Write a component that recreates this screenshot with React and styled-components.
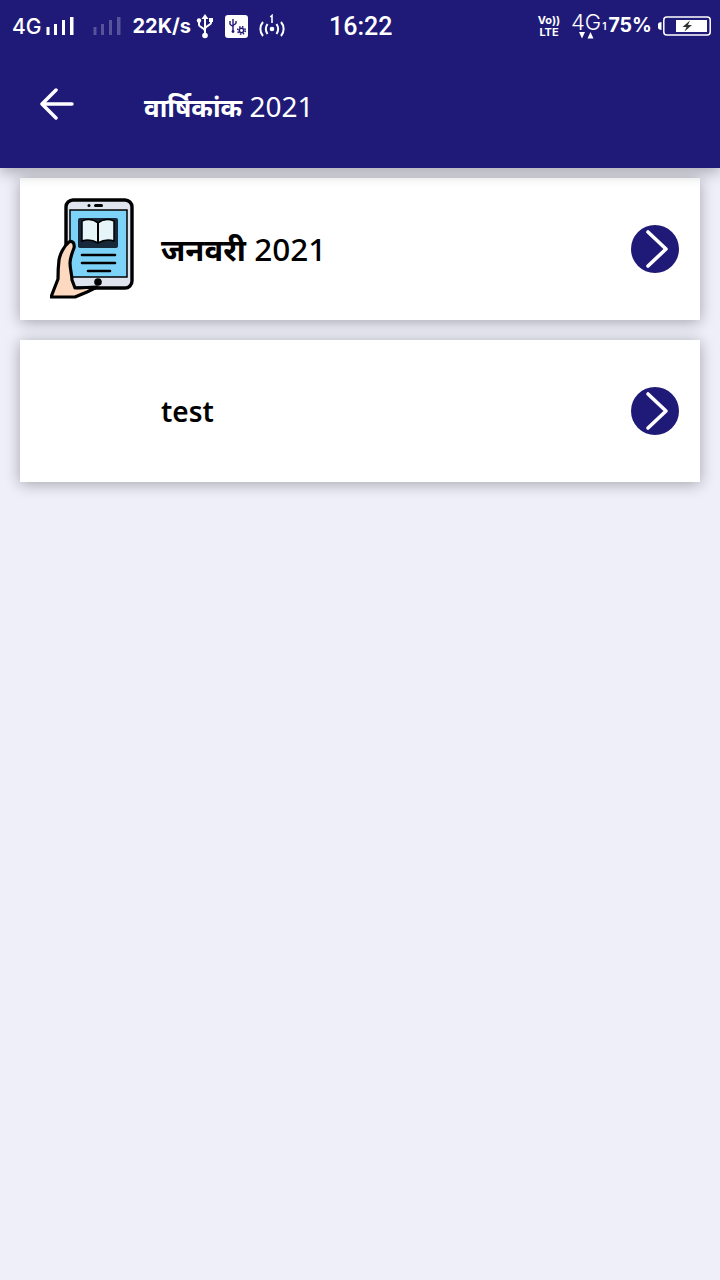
import React from 'react';
import styled, { createGlobalStyle } from 'styled-components';

const NAVY = '#1f1a77';

const GlobalStyle = createGlobalStyle`
  html, body {
    margin: 0;
    padding: 0;
    background: #eeeff9;
  }
  body {
    font-family: "Noto Sans", "Open Sans", sans-serif;
  }
`;

const Page = styled.div`
  width: 720px;
  height: 1280px;
  background: #eeeff9;
  overflow: hidden;
`;

const Header = styled.header`
  position: relative;
  z-index: 2;
  height: 168px;
  background: ${NAVY};
  box-shadow: 0 4px 14px rgba(0, 0, 0, 0.3);
`;

const StatusBar = styled.div`
  display: flex;
  align-items: center;
  height: 52px;
  padding: 0 12px;
  color: #fff;
  font-family: Inter, "Liberation Sans", sans-serif;
`;

const StatusGroup = styled.div`
  display: flex;
  align-items: center;
  width: ${(p) => p.$width}px;
  flex: none;
`;

const StatusText = styled.span`
  font-size: ${(p) => p.$size || 21}px;
  font-weight: ${(p) => p.$weight || 600};
  line-height: 1;
  margin-left: ${(p) => p.$ml || 0}px;
  white-space: nowrap;
`;

const Clock = styled.span`
  font-family: Roboto, sans-serif;
  font-size: 25px;
  font-weight: 500;
  width: 207px;
  flex: none;
`;

const Bars = styled.svg`
  flex: none;
  margin-left: ${(p) => p.$ml || 0}px;
  opacity: ${(p) => (p.$dim ? 0.25 : 1)};
`;

const StatusIcon = styled.svg`
  flex: none;
  margin-left: ${(p) => p.$ml || 0}px;
`;

const VolteLabel = styled.div`
  display: flex;
  flex-direction: column;
  align-items: center;
  width: 26px;
  flex: none;
  font-size: 11px;
  font-weight: 700;
  line-height: 12px;

  span {
    display: block;
  }
`;

const NetworkType = styled.div`
  display: flex;
  flex-direction: column;
  align-items: center;
  margin-left: 9px;
  flex: none;
  height: 30px;
`;

const ArrowIcon = styled.svg`
  margin-top: -1px;
`;

const AppBar = styled.div`
  display: flex;
  align-items: center;
  height: 104px;
  padding-left: 40px;
  color: #fff;
`;

const BackButton = styled.button`
  display: flex;
  width: 104px;
  padding: 0;
  border: 0;
  background: none;
  color: inherit;
`;

const Title = styled.h1`
  margin: 4px 0 0;
  font-size: 28px;
  font-weight: 400;
  line-height: 38px;
`;

const Hindi = styled.span`
  font-size: ${(p) => p.$size}px;
  font-weight: 700;
`;

const List = styled.main`
  display: flex;
  flex-direction: column;
  gap: 20px;
  padding: 10px 20px 0;
`;

const Card = styled.div`
  display: flex;
  align-items: center;
  height: 142px;
  background: #fff;
  box-shadow: 0 2px 14px rgba(0, 0, 0, 0.32);
`;

const IconSlot = styled.div`
  display: flex;
  width: 141px;
  padding-left: 30px;
  box-sizing: border-box;
  flex: none;
`;

const CardTitle = styled.span`
  flex: 1;
  color: #000;
  font-size: ${(p) => p.$size}px;
  font-weight: ${(p) => p.$weight};
  line-height: 42px;
`;

const Chevron = styled.div`
  display: flex;
  align-items: center;
  justify-content: center;
  width: 48px;
  height: 48px;
  margin-right: 21px;
  border-radius: 50%;
  background: ${NAVY};
  flex: none;
`;

function SignalBars({ dim, ml }) {
  return (
    <Bars $dim={dim} $ml={ml} width="30" height="20" viewBox="0 0 30 20" fill="#fff">
      <rect x="1.500" y="11" width="3" height="8" />
      <rect x="9" y="8" width="3" height="11" />
      <rect x="17" y="4" width="3" height="15" />
      <rect x="25" y="1" width="3.500" height="18" />
    </Bars>
  );
}

function UsbIcon() {
  return (
    <StatusIcon $ml={5} width="18" height="26" viewBox="0 0 18 26" fill="none" stroke="#fff" strokeWidth="2">
      <path d="M9 3v19" />
      <path d="M5.500 6 9 1l3.500 5z" fill="#fff" stroke="none" />
      <circle cx="9" cy="22.500" r="2.800" fill="#fff" stroke="none" />
      <path d="M3 8v4c0 2 6 3 6 6M15 8v2c0 2-6 3-6 6" />
      <rect x="13" y="5" width="4" height="4" fill="#fff" stroke="none" />
      <circle cx="3" cy="7.500" r="2.200" fill="#fff" stroke="none" />
    </StatusIcon>
  );
}

function UsbSettingsIcon() {
  return (
    <StatusIcon $ml={11} width="23" height="23" viewBox="0 0 23 23">
      <rect width="23" height="23" rx="3" fill="#fff" />
      <g fill="none" stroke={NAVY} strokeWidth="1.400">
        <path d="M8 4v12M5 6v3c0 1 3 2 3 3M11 6v2c0 1-3 2-3 3" />
        <circle cx="8" cy="16.500" r="1.400" fill={NAVY} stroke="none" />
        <circle cx="16.500" cy="15.500" r="2.200" strokeWidth="1.500" />
        <circle cx="16.500" cy="15.500" r="3.800" strokeWidth="1.500" strokeDasharray="1.500 1.500" />
      </g>
    </StatusIcon>
  );
}

function HotspotIcon() {
  return (
    <StatusIcon $ml={10} width="28" height="24" viewBox="0 0 28 24" fill="none" stroke="#fff" strokeWidth="2">
      <circle cx="14" cy="15" r="2.300" fill="#fff" stroke="none" />
      <path d="M9.500 10c-2 3-2 7 0 10M18.500 10c2 3 2 7 0 10M5 8c-3.500 4-3.500 10 0 14M23 8c3.500 4 3.500 10 0 14" />
      <path d="M12.300 3 14 1.500V9" strokeWidth="1.600" />
    </StatusIcon>
  );
}

function DataArrows() {
  return (
    <ArrowIcon width="16" height="7" viewBox="0 0 16 7" fill="#fff">
      <path d="M1 0h6L4 6.500zM9.500 6.500h6L12.500 0z" />
    </ArrowIcon>
  );
}

function Battery() {
  return (
    <StatusIcon $ml={6} width="53" height="20" viewBox="0 0 53 20">
      <path d="M3.500 6a4 4 0 0 0 0 8z" fill="#fff" />
      <rect x="5.800" y="1" width="46.400" height="18" rx="3" fill="none" stroke="#fff" strokeWidth="1.500" />
      <rect x="18" y="4" width="31" height="12" fill="#fff" />
      <path d="M32 4.500 24.500 11h4L26.500 15.500 34 9h-4l2-4.500z" fill="#333" />
    </StatusIcon>
  );
}

function BackArrow() {
  return (
    <svg width="34" height="32" viewBox="0 0 34 32" fill="none" stroke="#fff" strokeWidth="3.500" strokeLinecap="round" strokeLinejoin="round">
      <path d="M32 16H3" />
      <path d="M16 2 2 16l14 14" />
    </svg>
  );
}

function TabletBook() {
  return (
    <svg width="84" height="102" viewBox="0 0 84 102">
      <rect x="16" y="2" width="66" height="88" rx="7" fill="#dfe4ee" stroke="#000" strokeWidth="3.400" />
      <rect x="20" y="12" width="57" height="67" fill="#7dd3f7" stroke="#000" strokeWidth="1.500" />
      <rect x="44" y="6" width="9" height="3" rx="1.500" fill="#000" />
      <circle cx="39" cy="7.500" r="1.500" fill="#000" />
      <circle cx="48" cy="84" r="3.800" fill="#000" />
      <rect x="28" y="20" width="40" height="30" rx="2" fill="#16283a" />
      <path d="M32 23c5-2 11-2 16 2 5-4 11-4 16-2v20c-6-2-11-1-16 2-5-3-10-4-16-2z" fill="#e6f5f8" stroke="#000" strokeWidth="1.500" />
      <path d="M48 25v20" stroke="#000" strokeWidth="2" />
      <path d="M32 57h33M32 65h33M38 73h22" stroke="#000" strokeWidth="2.600" strokeLinecap="round" />
      <path d="M1 99 8 81c0-3 0-11 1-19 1-6 5-14 10-18 3-2 6 1 5 6-2 5-4 10-4 15 0 6 2 12 2 17l3 8c8 0 15-1 22-1l-10 5-12 5z" fill="#fdd9c0" stroke="#000" strokeWidth="3.200" strokeLinejoin="round" />
    </svg>
  );
}

function ChevronIcon() {
  return (
    <svg width="26" height="40" viewBox="0 0 26 40" fill="none" stroke="#fff" strokeWidth="3.600" strokeLinecap="round" strokeLinejoin="round" style={{ marginLeft: 3 }}>
      <path d="M4 3l18 17L4 37" />
    </svg>
  );
}

export default function App() {
  return (
    <Page>
      <GlobalStyle />
      <Header>
        <StatusBar>
          <StatusGroup $width={317}>
            <StatusText $size={21} $weight={500}>4G</StatusText>
            <SignalBars ml={4} />
            <SignalBars dim ml={17} />
            <StatusText $size={20} $weight={700} $ml={10}>22K/s</StatusText>
            <UsbIcon />
            <UsbSettingsIcon />
            <HotspotIcon />
          </StatusGroup>
          <Clock>16:22</Clock>
          <VolteLabel><span>Vo))</span><span>LTE</span></VolteLabel>
          <NetworkType>
            <StatusText $size={22} $weight={300}>4G</StatusText>
            <DataArrows />
          </NetworkType>
          <StatusText $size={10} $ml={1}>1</StatusText>
          <StatusText $size={19.500} $weight={700} $ml={2}>75%</StatusText>
          <Battery />
        </StatusBar>
        <AppBar>
          <BackButton aria-label="back"><BackArrow /></BackButton>
          <Title><Hindi $size={26}>वार्षिकांक</Hindi> 2021</Title>
        </AppBar>
      </Header>
      <List>
        <Card>
          <IconSlot><TabletBook /></IconSlot>
          <CardTitle $size={31.500} $weight={500}><Hindi $size={31}>जनवरी</Hindi> 2021</CardTitle>
          <Chevron><ChevronIcon /></Chevron>
        </Card>
        <Card>
          <IconSlot />
          <CardTitle $size={28} $weight={600}>test</CardTitle>
          <Chevron><ChevronIcon /></Chevron>
        </Card>
      </List>
    </Page>
  );
}
